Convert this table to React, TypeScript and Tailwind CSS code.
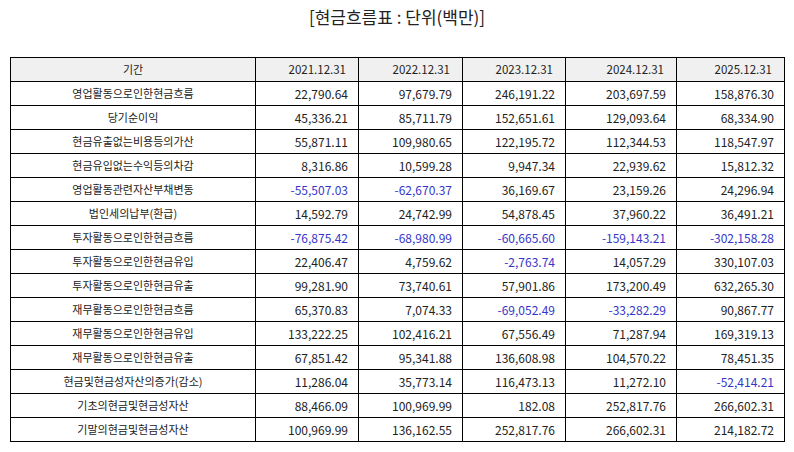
const header = ["2021.12.31", "2022.12.31", "2023.12.31", "2024.12.31", "2025.12.31"];

const rows: [string, string[]][] = [
  ["영업활동으로인한현금흐름", ["22,790.64", "97,679.79", "246,191.22", "203,697.59", "158,876.30"]],
  ["당기순이익", ["45,336.21", "85,711.79", "152,651.61", "129,093.64", "68,334.90"]],
  ["현금유출없는비용등의가산", ["55,871.11", "109,980.65", "122,195.72", "112,344.53", "118,547.97"]],
  ["현금유입없는수익등의차감", ["8,316.86", "10,599.28", "9,947.34", "22,939.62", "15,812.32"]],
  ["영업활동관련자산부채변동", ["-55,507.03", "-62,670.37", "36,169.67", "23,159.26", "24,296.94"]],
  ["법인세의납부(환급)", ["14,592.79", "24,742.99", "54,878.45", "37,960.22", "36,491.21"]],
  ["투자활동으로인한현금흐름", ["-76,875.42", "-68,980.99", "-60,665.60", "-159,143.21", "-302,158.28"]],
  ["투자활동으로인한현금유입", ["22,406.47", "4,759.62", "-2,763.74", "14,057.29", "330,107.03"]],
  ["투자활동으로인한현금유출", ["99,281.90", "73,740.61", "57,901.86", "173,200.49", "632,265.30"]],
  ["재무활동으로인한현금흐름", ["65,370.83", "7,074.33", "-69,052.49", "-33,282.29", "90,867.77"]],
  ["재무활동으로인한현금유입", ["133,222.25", "102,416.21", "67,556.49", "71,287.94", "169,319.13"]],
  ["재무활동으로인한현금유출", ["67,851.42", "95,341.88", "136,608.98", "104,570.22", "78,451.35"]],
  ["현금및현금성자산의증가(감소)", ["11,286.04", "35,773.14", "116,473.13", "11,272.10", "-52,414.21"]],
  ["기초의현금및현금성자산", ["88,466.09", "100,969.99", "182.08", "252,817.76", "266,602.31"]],
  ["기말의현금및현금성자산", ["100,969.99", "136,162.55", "252,817.76", "266,602.31", "214,182.72"]],
];

export default function App() {
  return (
    <div className="w-[794px] h-[452px] bg-white px-[10px] pt-[5px] text-[#222] font-['Noto_Sans_CJK_KR',sans-serif]">
      <h1 className="text-center text-[17px] leading-[24px] mb-[28px]">[현금흐름표 : 단위(백만)]</h1>
      <table className="w-[774px] table-fixed border-collapse text-[11px]">
        <colgroup>
          <col className="w-[245px]" />
          <col className="w-[103px]" />
          <col className="w-[104px]" />
          <col className="w-[103px]" />
          <col className="w-[111px]" />
          <col className="w-[108px]" />
        </colgroup>
        <thead>
          <tr className="h-[24px] bg-[#f0f0f0]">
            <th className="border border-black font-normal text-center">기간</th>
            {header.map((h) => (
              <th key={h} className="border border-black font-normal text-right text-[11.5px] pr-[12px]">
                {h}
              </th>
            ))}
          </tr>
        </thead>
        <tbody>
          {rows.map(([label, vals]) => (
            <tr key={label} className="h-[24px]">
              <td className="border border-black text-center">{label}</td>
              {vals.map((v, i) => (
                <td
                  key={i}
                  className={
                    v.startsWith("-")
                      ? "border border-black text-right text-[12px] pr-[10px] text-[#3535c8]"
                      : "border border-black text-right text-[12px] pr-[10px]"
                  }
                >
                  {v}
                </td>
              ))}
            </tr>
          ))}
        </tbody>
      </table>
    </div>
  );
}
